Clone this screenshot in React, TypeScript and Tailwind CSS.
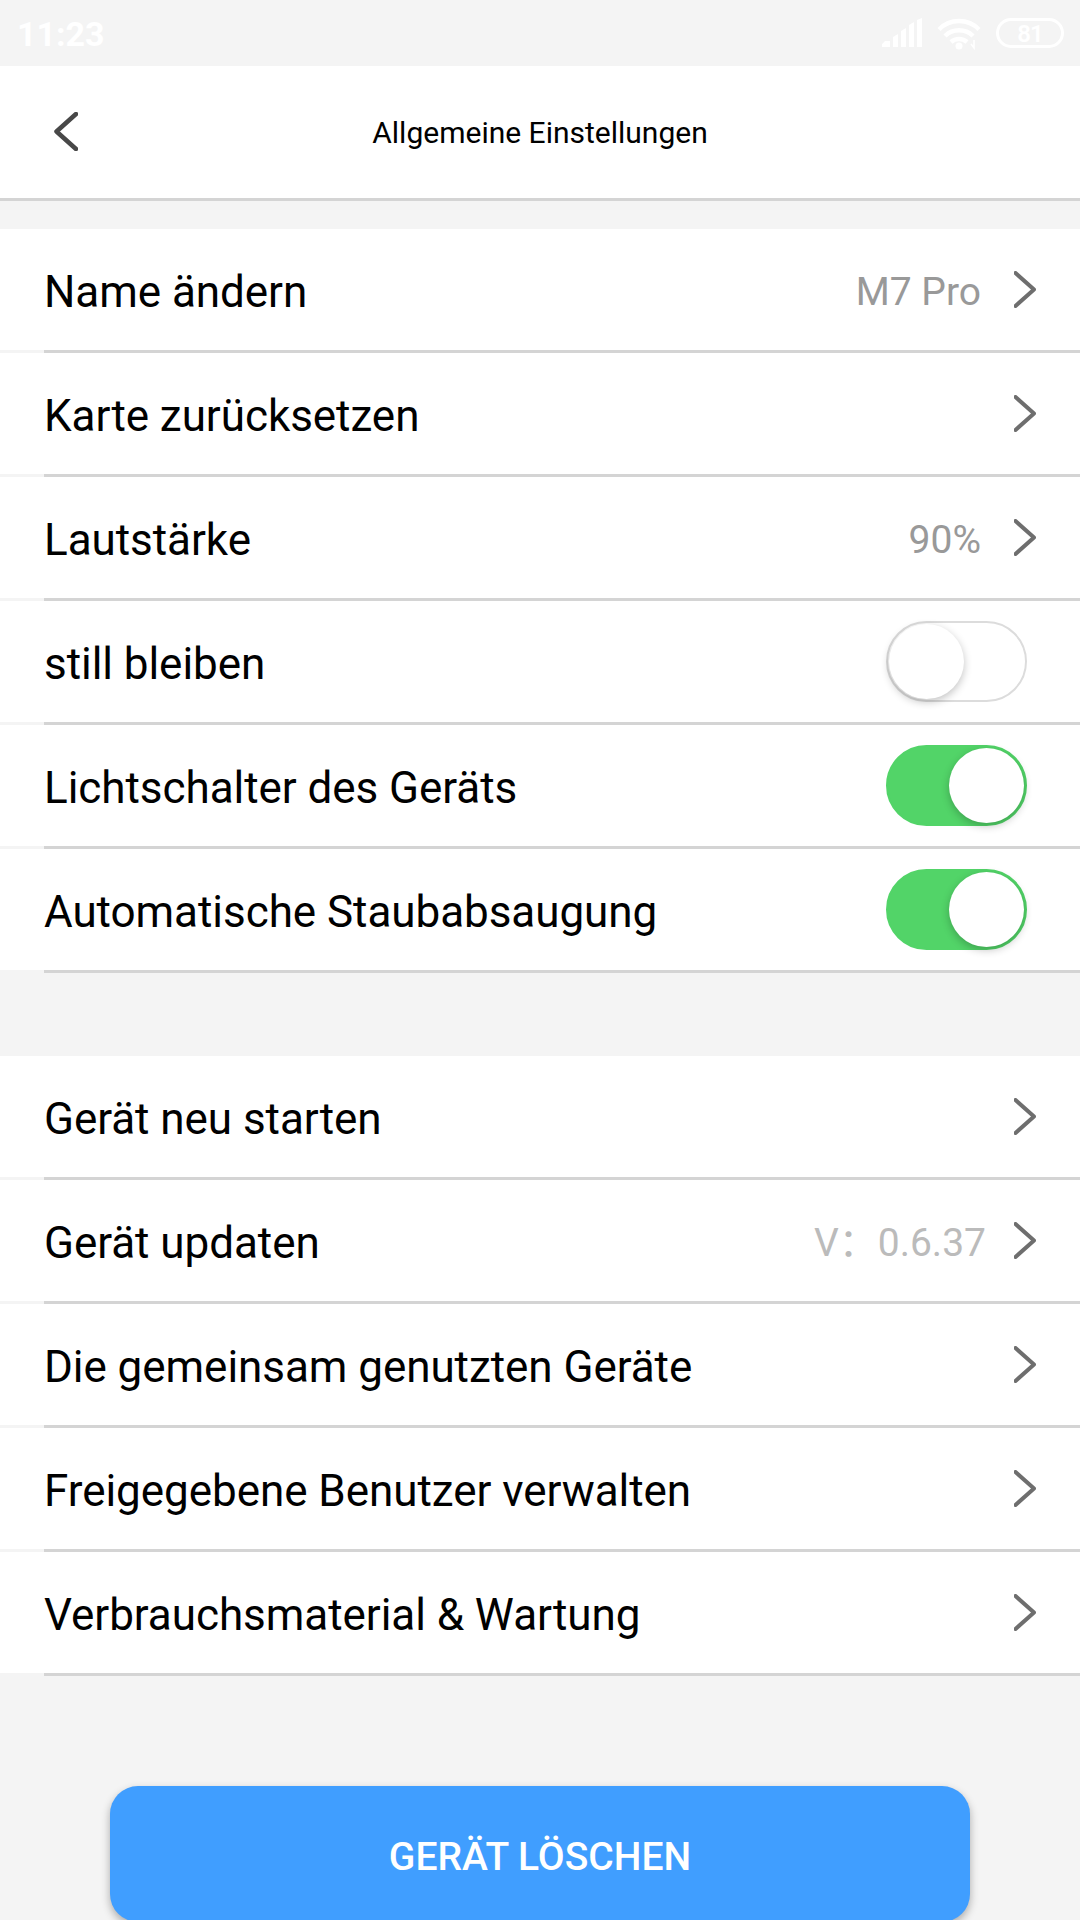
import React, { useState } from 'react';

interface SettingItem {
  id: string;
  label: string;
  value?: string;
  toggle?: boolean;
}

const generalItems: SettingItem[] = [
  { id: 'name', label: 'Name ändern', value: 'M7 Pro' },
  { id: 'map', label: 'Karte zurücksetzen' },
  { id: 'volume', label: 'Lautstärke', value: '90%' },
  { id: 'quiet', label: 'still bleiben', toggle: true },
  { id: 'light', label: 'Lichtschalter des Geräts', toggle: true },
  { id: 'dust', label: 'Automatische Staubabsaugung', toggle: true },
];

const deviceItems: SettingItem[] = [
  { id: 'restart', label: 'Gerät neu starten' },
  { id: 'update', label: 'Gerät updaten', value: '0.6.37' },
  { id: 'shared', label: 'Die gemeinsam genutzten Geräte' },
  { id: 'users', label: 'Freigegebene Benutzer verwalten' },
  { id: 'parts', label: 'Verbrauchsmaterial & Wartung' },
];

function StatusBar() {
  return (
    <div className="flex h-[66px] items-center justify-between bg-[#f4f4f4] pl-[17px] pr-4 text-white">
      <span className="pt-px text-[34px] leading-none font-bold">11:23</span>
      <div className="flex items-center">
        <svg width="41" height="30" viewBox="0 0 41 30" fill="currentColor">
          <path d="M0 26l3-3h5v6H0zM11 19l5-3v13h-5zM19 13l5-3v19h-5zM27 7l5-3v25h-5zM35 2l5-2v29h-5z" />
        </svg>
        <svg className="ml-[14px]" width="44" height="33" viewBox="0 0 44 33" fill="none" stroke="currentColor" strokeWidth="4.500">
          <path d="M2 12.500a28 28 0 0 1 40 0" />
          <path d="M8 19a20 20 0 0 1 28 0" />
          <path d="M14 25a12 12 0 0 1 16 0" />
          <circle cx="22" cy="29" r="3.500" fill="currentColor" stroke="none" />
          <path d="M34 27l3 4v-8" strokeWidth="1.500" />
        </svg>
        <div className="ml-[15px] flex h-[30px] w-[68px] items-center justify-center rounded-full border-[3px] border-white pt-[2px] text-[24px] leading-none font-semibold tracking-[-1px]">
          81
        </div>
      </div>
    </div>
  );
}

function ChevronRight() {
  return (
    <svg width="22" height="37" viewBox="0 0 22 37" fill="none" stroke="#6e6e6e" strokeWidth="4" strokeLinecap="round" strokeLinejoin="round">
      <path d="M1.500 2L20 18.500L1.500 35" />
    </svg>
  );
}

function Toggle({ on, onChange }: { on: boolean; onChange: () => void }) {
  return (
    <button
      onClick={onChange}
      role="switch"
      aria-checked={on}
      className={`mr-[9px] flex h-[81px] w-[141px] items-center rounded-full border-2 px-px ${
        on ? 'justify-end border-[#52d468] bg-[#52d468]' : 'justify-start border-[#dcdcdc] bg-white'
      }`}
    >
      <span className="h-[75px] w-[75px] rounded-full bg-white shadow-[0_3px_8px_rgba(0,0,0,0.24)]" />
    </button>
  );
}

function SettingValue({ item }: { item: SettingItem }) {
  if (item.id === 'update') {
    return (
      <span className="mr-[28px] pt-[5px] text-[39px] leading-none whitespace-nowrap text-[#bbbbbb]">
        V<span lang="zh-CN" className="font-['Noto_Sans_CJK_SC',sans-serif] leading-[0]">：</span>
        {item.value}
      </span>
    );
  }
  return <span className="mr-[33px] pt-[5px] text-[39px] leading-none text-[#999999]">{item.value}</span>;
}

function SettingRow({ item, on, onToggle }: { item: SettingItem; on: boolean; onToggle: () => void }) {
  return (
    <div>
      <div className="flex h-[121px] items-center bg-white pr-[44px] pl-[44px]">
        <span className="flex-1 pt-[5px] text-[44px] leading-none tracking-[-0.05px] whitespace-nowrap">{item.label}</span>
        {item.value && <SettingValue item={item} />}
        {item.toggle ? <Toggle on={on} onChange={onToggle} /> : <ChevronRight />}
      </div>
      <div className="ml-[44px] h-[3px] bg-[#d4d4d4]" />
    </div>
  );
}

export default function App() {
  const [switches, setSwitches] = useState<Record<string, boolean>>({
    quiet: false,
    light: true,
    dust: true,
  });

  const handleToggle = (id: string) => {
    setSwitches((prev) => ({ ...prev, [id]: !prev[id] }));
  };

  const renderItems = (items: SettingItem[]) =>
    items.map((item) => (
      <SettingRow key={item.id} item={item} on={!!switches[item.id]} onToggle={() => handleToggle(item.id)} />
    ));

  return (
    <div className="h-[1920px] w-[1080px] overflow-hidden bg-[#f4f4f4] font-[Roboto,'Noto_Sans',sans-serif] text-black">
      <StatusBar />

      {/* Header */}
      <header className="grid h-[135px] grid-cols-[1fr_auto_1fr] items-center border-b-[3px] border-[#d4d4d4] bg-white">
        <button className="mb-px ml-[54px] w-[24px]">
          <svg width="24" height="39" viewBox="0 0 24 39" fill="none" stroke="#484848" strokeWidth="4.500" strokeLinecap="round" strokeLinejoin="round">
            <path d="M22 2L2.500 19.500L22 37" />
          </svg>
        </button>
        <h1 className="pt-[2px] text-[30px] leading-none">Allgemeine Einstellungen</h1>
      </header>

      <section className="mt-[28px]">{renderItems(generalItems)}</section>
      <section className="mt-[83px]">{renderItems(deviceItems)}</section>

      {/* Delete button */}
      <button className="mx-auto mt-[110px] flex h-[136px] w-[860px] items-center justify-center rounded-[28px] bg-[#409eff] pt-[7px] text-[39px] font-medium text-white shadow-[0_4px_8px_rgba(0,0,0,0.3)]">
        GERÄT LÖSCHEN
      </button>
    </div>
  );
}
